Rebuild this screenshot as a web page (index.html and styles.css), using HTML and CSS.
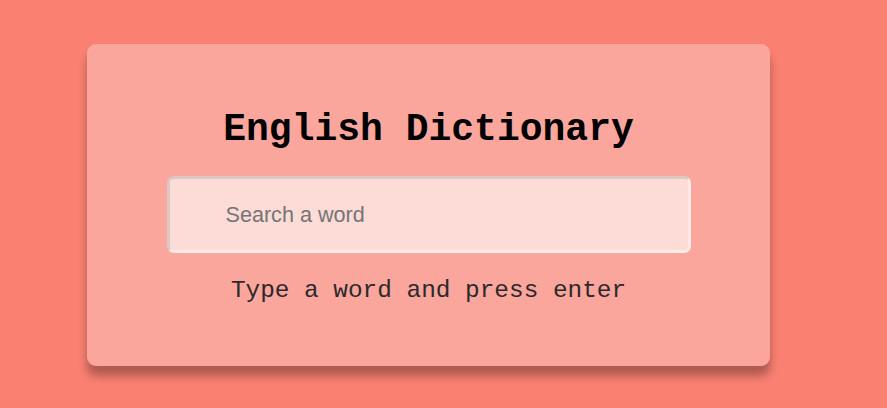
FILE: index.html
```
<!DOCTYPE html>
<html>
<head>
<meta charset="utf-8">
<link rel="stylesheet" href="styles.css">
</head>
<body>
<div class="page">
  <div class="container">
    <h1 class="heading">English Dictionary</h1>
    <input class="input" type="text" placeholder="Search a word">
    <p class="info-text">Type a word and press enter</p>
  </div>
</div>
</body>
</html>
```
FILE: styles.css
```
html, body {
  margin: 0;
  padding: 0;
}
body {
  background-color: salmon;
  font-family: "Courier New", "Liberation Mono", monospace;
  width: 887px;
  height: 408px;
  overflow: hidden;
}
.page {
  padding: 44px 0 0 87px;
}
.container {
  box-sizing: border-box;
  width: 683px;
  height: 322px;
  background-color: rgba(255, 255, 255, 0.3);
  border-radius: 9px;
  box-shadow: 0 10px 10px rgba(0, 0, 0, 0.3);
  display: flex;
  flex-direction: column;
  align-items: center;
  padding-top: 64px;
}
.heading {
  margin: 0;
  font-size: 38px;
  line-height: 44px;
  font-weight: 700;
  color: #000;
}
.input {
  box-sizing: border-box;
  margin-top: 24px;
  width: 524px;
  height: 77px;
  background-color: rgba(255, 255, 255, 0.6);
  border: 3px inset rgba(255, 255, 255, 0.4);
  border-radius: 7px;
  font-family: "Liberation Sans", Arial, sans-serif;
  font-size: 21.6px;
  padding: 0 56px;
  outline: none;
}
.input::placeholder {
  color: #757575;
}
.info-text {
  margin: 24px 0 0 0;
  font-size: 24.4px;
  line-height: 28px;
  color: #2a2a2a;
}
```
